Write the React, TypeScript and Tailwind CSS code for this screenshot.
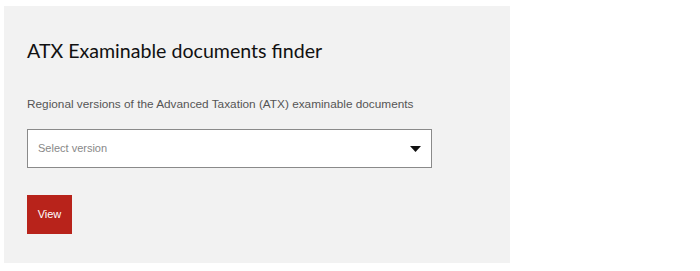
export default function App() {
  return (
    <div className="h-[271px] w-[700px] bg-white pl-1 pt-1.5">
      <div className="flex h-[257px] w-[506px] flex-col bg-[#f2f2f2] px-[23px] pt-[33px]">
        <h2 className="font-['Lato',sans-serif] text-[19.6px] leading-6 text-[#111]">
          ATX Examinable documents finder
        </h2>
        <p className="mt-[33px] font-['Liberation_Sans',Arial,sans-serif] text-[11.8px] leading-4 text-[#555]">
          Regional versions of the Advanced Taxation (ATX) examinable documents
        </p>
        <div className="mt-[17px] flex h-[39px] w-[405px] items-center justify-between border border-[#8a8a8a] bg-white pl-[10px] pr-[10px]">
          <span className="font-['Liberation_Sans',Arial,sans-serif] text-[11px] text-[#888]">
            Select version
          </span>
          <svg width="11" height="6" viewBox="0 0 11 6" aria-hidden="true">
            <path d="M0 0h11L5.5 6z" fill="#111" />
          </svg>
        </div>
        <button
          type="button"
          className="mt-[27px] flex h-[39px] w-[45px] items-center justify-center bg-[#b8231b] font-['Liberation_Sans',Arial,sans-serif] text-[11px] text-white"
        >
          View
        </button>
      </div>
    </div>
  );
}
